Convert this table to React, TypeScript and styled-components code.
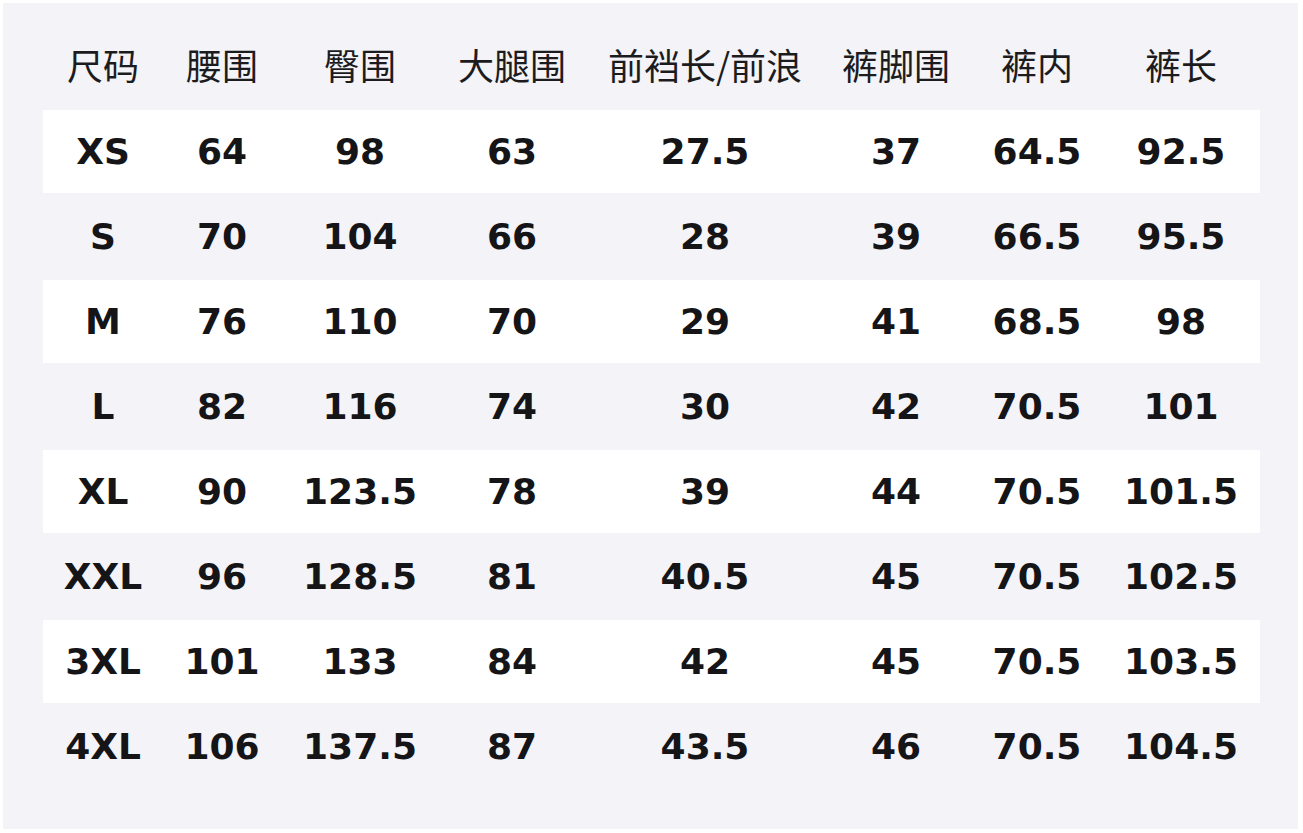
import styled, { createGlobalStyle } from "styled-components";

const GlobalStyle = createGlobalStyle`
  html, body {
    margin: 0;
    padding: 0;
    background: #ffffff;
  }
`;

const Panel = styled.div`
  box-sizing: border-box;
  width: 1295px;
  height: 826px;
  margin: 3px 0 0 3px;
  padding: 0 38px 0 40px;
  background: #f3f3f8;
`;

const Table = styled.div`
  display: grid;
  grid-template-columns: 120px 118px 158px 146px 240px 142px 140px 153px;

  & > div:nth-child(8n) {
    padding-right: 5px;
  }
`;

const HeadCell = styled.div`
  height: 107px;
  padding-top: 14px;
  box-sizing: border-box;
  display: flex;
  align-items: center;
  justify-content: center;
  font-family: "Noto Sans CJK SC", "DejaVu Sans", sans-serif;
  font-size: 36px;
  font-weight: 400;
  color: #1c1c1e;
  white-space: nowrap;
`;

const Cell = styled.div<{ $striped: boolean }>`
  box-sizing: border-box;
  height: ${(p) => (p.$striped ? 83 : 87)}px;
  display: flex;
  align-items: center;
  justify-content: center;
  background: ${(p) => (p.$striped ? "#ffffff" : "transparent")};
  font-family: "DejaVu Sans", Verdana, sans-serif;
  font-size: 36px;
  font-weight: 700;
  color: #151517;
  white-space: nowrap;
`;

const headers = ["尺码", "腰围", "臀围", "大腿围", "前裆长/前浪", "裤脚围", "裤内", "裤长"];

const rows: string[][] = [
  ["XS", "64", "98", "63", "27.5", "37", "64.5", "92.5"],
  ["S", "70", "104", "66", "28", "39", "66.5", "95.5"],
  ["M", "76", "110", "70", "29", "41", "68.5", "98"],
  ["L", "82", "116", "74", "30", "42", "70.5", "101"],
  ["XL", "90", "123.5", "78", "39", "44", "70.5", "101.5"],
  ["XXL", "96", "128.5", "81", "40.5", "45", "70.5", "102.5"],
  ["3XL", "101", "133", "84", "42", "45", "70.5", "103.5"],
  ["4XL", "106", "137.5", "87", "43.5", "46", "70.5", "104.5"],
];

export default function App() {
  return (
    <>
      <GlobalStyle />
      <Panel>
        <Table>
          {headers.map((h) => (
            <HeadCell key={h}>{h}</HeadCell>
          ))}
          {rows.map((row, i) =>
            row.map((v, j) => (
              <Cell key={`${i}-${j}`} $striped={i % 2 === 0}>
                {v}
              </Cell>
            ))
          )}
        </Table>
      </Panel>
    </>
  );
}
